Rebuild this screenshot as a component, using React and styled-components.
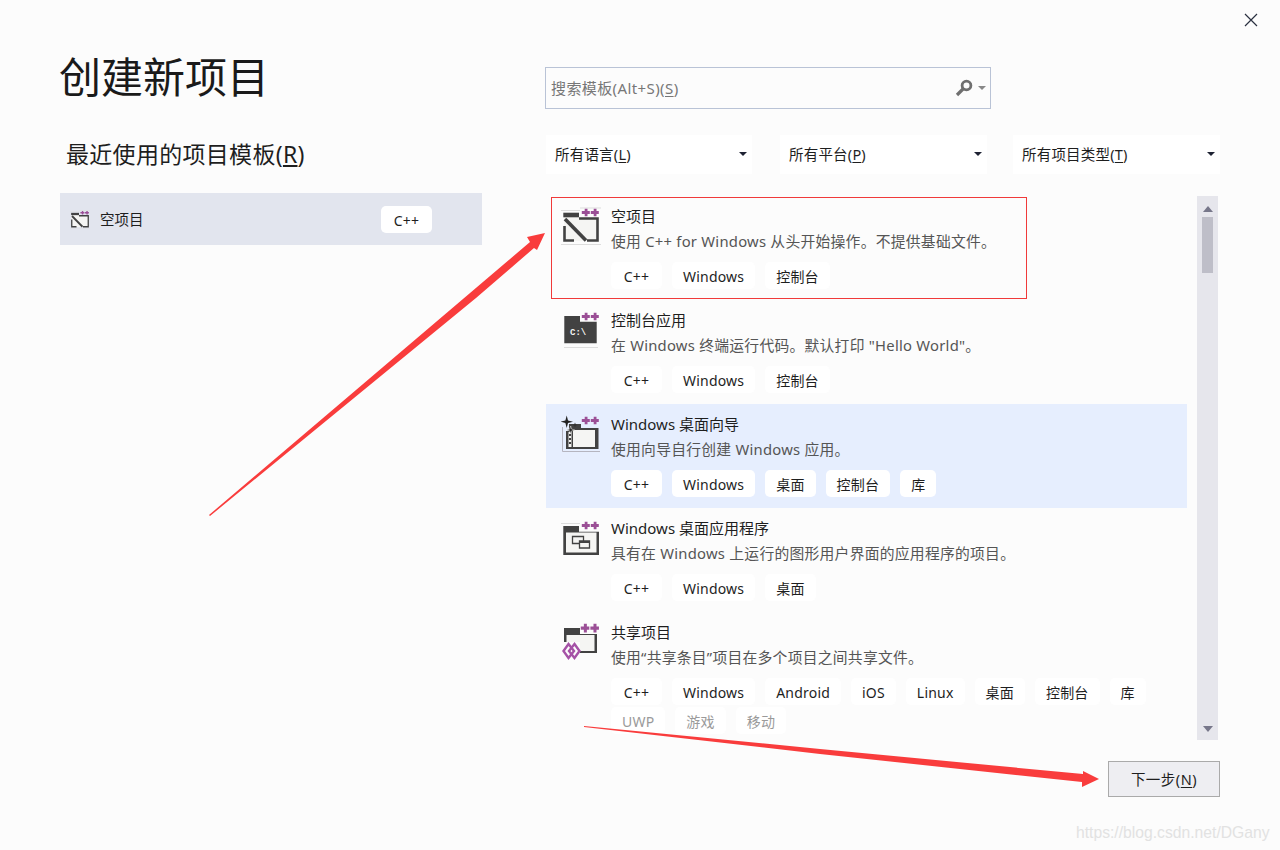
import React from 'react';
import styled, { createGlobalStyle } from 'styled-components';

const FONT = '"Noto Sans", "Noto Sans CJK SC", sans-serif';

const GlobalStyle = createGlobalStyle`
  html, body {
    margin: 0;
    padding: 0;
    background: #fcfcfc;
  }
  body {
    font-family: ${FONT};
    color: #1e1e1e;
    overflow: hidden;
  }
`;

const Window = styled.div`
  position: relative;
  width: 1280px;
  height: 850px;
  box-sizing: border-box;
  background: #fcfcfc;
  display: grid;
  grid-template-columns: 422px 674px;
  column-gap: 64px;
  padding: 0 60px;
`;

const LeftColumn = styled.div`
  display: flex;
  flex-direction: column;
`;

const Title = styled.h1`
  margin: 47px 0 0 -1px;
  height: 60px;
  font-size: 42px;
  line-height: 60px;
  font-weight: 400;
  color: #1a1a1a;
`;

const SectionTitle = styled.h2`
  margin: 29px 0 0 6px;
  height: 36px;
  font-size: 23px;
  line-height: 36px;
  font-weight: 400;
  letter-spacing: 0.3px;
  color: #1e1e1e;
`;

const RecentItem = styled.div`
  margin-top: 21px;
  height: 52px;
  box-sizing: border-box;
  background: #e2e5ee;
  display: flex;
  align-items: center;
  padding: 0 50px 0 10px;
`;

const RecentName = styled.span`
  margin: 0 0 2px 10px;
  flex: 1;
  font-size: 14.5px;
`;

const RightColumn = styled.div`
  display: flex;
  flex-direction: column;
`;

const SearchBox = styled.div`
  margin: 67px 0 0 -1px;
  width: 446px;
  height: 42px;
  box-sizing: border-box;
  border: 1px solid #b9c3d6;
  display: flex;
  align-items: center;
  padding: 0 4px 0 5px;
  gap: 5px;
`;

const SearchHint = styled.span`
  flex: 1;
  padding-bottom: 2px;
  font-size: 15px;
  letter-spacing: 0.4px;
  color: #777;
`;

const Filters = styled.div`
  margin-top: 26px;
  display: grid;
  grid-template-columns: 234px 233px 207px;
`;

const Filter = styled.div`
  width: ${(p) => p.$width}px;
  height: 39px;
  box-sizing: border-box;
  background: #fff;
  display: flex;
  align-items: center;
  justify-content: space-between;
  padding: 0 5px 2px 9px;
  font-size: 14.5px;
  letter-spacing: 0.2px;
  color: #1e1e1e;
`;

const Caret = styled.span`
  width: 0;
  height: 0;
  border-left: 4px solid transparent;
  border-right: 4px solid transparent;
  border-top: 4px solid ${(p) => p.$color || '#1e2233'};
`;

const ListArea = styled.div`
  margin-top: 22px;
  display: flex;
  height: 544px;
`;

const List = styled.div`
  width: 641px;
  overflow: hidden;
`;

const Row = styled.div`
  position: relative;
  display: flex;
  gap: 10px;
  height: 104px;
  box-sizing: border-box;
  padding: 9px 0 0 15px;
  background: ${(p) => (p.$active ? '#e6eefe' : 'transparent')};
  &:last-child {
    height: 128px;
  }
`;

const RedBox = styled.div`
  position: absolute;
  left: 5px;
  top: 1px;
  width: 476px;
  height: 102px;
  box-sizing: border-box;
  border: 1px solid #f03a3a;
  pointer-events: none;
`;

const RowIcon = styled.div`
  width: 40px;
  flex: none;
`;

const RowBody = styled.div`
  flex: 1;
  min-width: 0;
`;

const RowTitle = styled.div`
  height: 22px;
  font-size: 15px;
  line-height: 22px;
  color: #1e1e1e;
`;

const RowDesc = styled.div`
  height: 22px;
  margin-top: 3px;
  font-size: 14.8px;
  line-height: 22px;
  letter-spacing: 0.25px;
  color: #555;
`;

const Tags = styled.div`
  margin-top: 10px;
  display: flex;
  flex-wrap: wrap;
  column-gap: 10px;
  row-gap: 2px;
`;

const Tag = styled.span`
  height: 27px;
  min-width: ${(p) => p.$min || 0}px;
  box-sizing: border-box;
  padding: 0 11px;
  border-radius: 5px;
  background: #fff;
  font-size: 14px;
  line-height: 29px;
  letter-spacing: 0.2px;
  text-align: center;
  color: ${(p) => (p.$muted ? '#9a9a9a' : '#1e1e1e')};
  white-space: nowrap;
`;

const Scrollbar = styled.div`
  margin-left: 10px;
  width: 21px;
  background: #e6e6ec;
  display: flex;
  flex-direction: column;
  align-items: center;
`;

const ScrollArrow = styled.span`
  margin-top: ${(p) => p.$top}px;
  width: 0;
  height: 0;
  border-left: 5px solid transparent;
  border-right: 5px solid transparent;
  ${(p) => (p.$down ? 'border-top' : 'border-bottom')}: 6px solid #77778a;
`;

const ScrollThumb = styled.span`
  margin-top: 5px;
  width: 11px;
  height: 56px;
  background: #bebec8;
`;

const Footer = styled.div`
  margin-top: 21px;
  display: flex;
  justify-content: flex-end;
`;

const NextButton = styled.button`
  width: 112px;
  height: 36px;
  box-sizing: border-box;
  padding: 0 0 2px;
  background: #eeeef2;
  border: 1px solid #aaa;
  font-family: inherit;
  font-size: 14.5px;
  letter-spacing: 0.5px;
  color: #1e1e1e;
`;

const CloseButton = styled.button`
  position: absolute;
  top: 13px;
  left: 1244px;
  width: 14px;
  height: 14px;
  padding: 0;
  border: 0;
  background: none;
  display: flex;
`;

const Overlay = styled.svg`
  position: absolute;
  left: 0;
  top: 0;
  pointer-events: none;
`;

const Watermark = styled.span`
  position: absolute;
  left: 1076px;
  top: 823px;
  font-family: 'Liberation Sans', sans-serif;
  font-size: 15.7px;
  line-height: 20px;
  color: #e2e2e2;
`;

const Key = styled.u`
  text-underline-offset: 2px;
`;

const PlusPair = ({ y = 0, big }) => (
  <g fill="#9b4f96" transform={big ? 'translate(-2.500 -1.500) scale(1.070 1.150)' : `translate(0 ${y})`}>
    <path d="M20.800 6.100h2.900V3.800h2.800v2.300h2.300v2.800h-2.300v2.300h-2.800V8.900h-2.900z" />
    <path d="M29.800 6.100h2.900V3.800h2.800v2.300h2.300v2.800h-2.300v2.300h-2.800V8.900h-2.900z" />
  </g>
);

// each template icon is the same window frame with something different inside
const TemplateIcon = ({ kind, size = 40 }) => {
  const dark = '#424242';
  const paper = '#f5f5f3';
  return (
    <svg width={size} height={size} viewBox="0 0 40 40">
      {kind === 'empty' && (
        <g>
          <path d="M0 5.500h19M0 39.500h40M19 3h21" stroke="#ddd" fill="none" />
          <path d="M3 12h34v24H3z" fill={paper} />
          <path d="M2.300 7.700H18v4.600H2.300z" fill={dark} />
          <path d="M18 13.500h18.500V35.500H26M3.500 21V35.500H13" stroke={dark} strokeWidth="2.600" fill="none" />
          <path d="M4 14L25 35.500" stroke={dark} strokeWidth="3.600" fill="none" />
        </g>
      )}
      {kind === 'console' && (
        <g>
          <path d="M3 38.500h34" stroke="#ddd" fill="none" />
          <path d="M3.300 7H19v5.700h16.700v21.600H3.300z" fill={dark} />
          <text x="9" y="26" fontSize="9" fontWeight="700" fontFamily="Liberation Mono, monospace" fill={paper}>C:\</text>
        </g>
      )}
      {kind === 'wizard' && (
        <g>
          <path d="M1.500 14v24.500H39" stroke="#b5b5c0" fill="none" />
          <path d="M8 11H20v4h17.500v21H5V18h3z" fill={dark} />
          <path d="M12 17h22v17H12z" fill={paper} />
          <path d="M7.500 19h3v15h-3z" fill={paper} />
          <path d="M8 21h2v2H8zM8 25h2v2H8zM8 29h2v2H8z" fill={dark} />
          <path d="M5.700 2.500l1.300 5 5 1.200-5 1.300-1.300 5-1.300-5-5-1.300 5-1.200z" fill="#222" />
          <path d="M9.700 13l.9 3.100 3.100.9-3.100.9-.9 3.100-.9-3.100-3.100-.9 3.100-.9z" fill="#222" stroke={paper} strokeWidth="0.500" />
          <path d="M14 9.500l.7 1.800 1.800.7-1.800.7-.7 1.800-.7-1.800-1.800-.7 1.800-.7z" fill="#333" />
        </g>
      )}
      {kind === 'desktop' && (
        <g>
          <path d="M0 6.500h19" stroke="#ddd" fill="none" />
          <path d="M2.300 9H18v5.700h20V38H2.300z" fill={dark} />
          <path d="M5 15.500h30.500V35.500H5z" fill={paper} />
          <path d="M11.500 19.500h11v7h-11z" fill={paper} stroke={dark} strokeWidth="1.300" />
          <path d="M18.500 24h10v7h-10z" fill={paper} stroke={dark} strokeWidth="1.300" />
          <path d="M18.500 24h10v2h-10z" fill={dark} />
        </g>
      )}
      {kind === 'shared' && (
        <g>
          <path d="M3 7h16v6h17v19H3z" fill={dark} />
          <path d="M5.500 14h28v16h-28z" fill={paper} />
          <path d="M2 21h17v18H2z" fill="#fcfcfc" />
          <g fill="none" stroke="#a552a6" strokeWidth="2.400">
            <path d="M7.500 23l5.500 7-5.500 7-5-7z" />
            <path d="M13.500 23l5 7-5 7-5.500-7z" />
          </g>
        </g>
      )}
      <PlusPair y={kind === 'desktop' ? 1 : 0} big={kind === 'shared'} />
    </svg>
  );
};

const TagChip = ({ label, muted }) => (
  <Tag $muted={muted} $min={label === 'C++' ? 51 : 0}>
    {label}
  </Tag>
);

const Template = ({ kind, title, desc, tags, muted = [], active, marked }) => (
  <Row $active={active}>
    <RowIcon>
      <TemplateIcon kind={kind} />
    </RowIcon>
    <RowBody>
      <RowTitle>{title}</RowTitle>
      <RowDesc>{desc}</RowDesc>
      <Tags>
        {tags.map((t) => (
          <TagChip key={t} label={t} />
        ))}
        {muted.map((t) => (
          <TagChip key={t} label={t} muted />
        ))}
      </Tags>
    </RowBody>
    {marked && <RedBox />}
  </Row>
);

const templates = [
  {
    kind: 'empty',
    title: '空项目',
    desc: '使用 C++ for Windows 从头开始操作。不提供基础文件。',
    tags: ['C++', 'Windows', '控制台'],
    marked: true,
  },
  {
    kind: 'console',
    title: '控制台应用',
    desc: '在 Windows 终端运行代码。默认打印 "Hello World"。',
    tags: ['C++', 'Windows', '控制台'],
  },
  {
    kind: 'wizard',
    title: 'Windows 桌面向导',
    desc: '使用向导自行创建 Windows 应用。',
    tags: ['C++', 'Windows', '桌面', '控制台', '库'],
    active: true,
  },
  {
    kind: 'desktop',
    title: 'Windows 桌面应用程序',
    desc: '具有在 Windows 上运行的图形用户界面的应用程序的项目。',
    tags: ['C++', 'Windows', '桌面'],
  },
  {
    kind: 'shared',
    title: '共享项目',
    desc: '使用“共享条目”项目在多个项目之间共享文件。',
    tags: ['C++', 'Windows', 'Android', 'iOS', 'Linux', '桌面', '控制台', '库'],
    muted: ['UWP', '游戏', '移动'],
  },
];

const filters = [
  ['所有语言', 'L', 206],
  ['所有平台', 'P', 207],
  ['所有项目类型', 'T', 207],
];

const App = () => (
  <Window>
    <GlobalStyle />
    <LeftColumn>
      <Title>创建新项目</Title>
      <SectionTitle>
        最近使用的项目模板(<Key>R</Key>)
      </SectionTitle>
      <RecentItem>
        <TemplateIcon kind="empty" size={20} />
        <RecentName>空项目</RecentName>
        <TagChip label="C++" />
      </RecentItem>
    </LeftColumn>

    <RightColumn>
      <SearchBox>
        <SearchHint>
          搜索模板(Alt+S)(<Key>S</Key>)
        </SearchHint>
        <svg width="18" height="18" viewBox="0 0 18 18">
          <circle cx="11.500" cy="6.500" r="4.400" fill="none" stroke="#6f6f6f" strokeWidth="2.800" />
          <path d="M8 10L2 16" stroke="#6f6f6f" strokeWidth="3.200" />
        </svg>
        <Caret $color="#888" />
      </SearchBox>
      <Filters>
        {filters.map(([label, key, width]) => (
          <Filter key={key} $width={width}>
            <span>
              {label}(<Key>{key}</Key>)
            </span>
            <Caret />
          </Filter>
        ))}
      </Filters>
      <ListArea>
        <List>
          {templates.map((t) => (
            <Template key={t.kind} {...t} />
          ))}
        </List>
        <Scrollbar>
          <ScrollArrow $top={10} />
          <ScrollThumb />
          <ScrollArrow $top={453} $down />
        </Scrollbar>
      </ListArea>
      <Footer>
        <NextButton>
          下一步(<Key>N</Key>)
        </NextButton>
      </Footer>
    </RightColumn>

    <CloseButton>
      <svg width="14" height="14" viewBox="0 0 14 14">
        <path d="M1 1l12 12M13 1L1 13" stroke="#2a3040" strokeWidth="1.200" />
      </svg>
    </CloseButton>

    <Overlay width="1280" height="850" viewBox="0 0 1280 850">
      <path d="M209 515L530 242L527 237L545 233L537 250L534 248L476 298L210 516z" fill="#f93c3c" />
      <path d="M584 726L820 749L1083 774L1083 771L1099 779L1082 787L1082 782L820 754L584 727z" fill="#f93c3c" />
    </Overlay>
    <Watermark>https://blog.csdn.net/DGany</Watermark>
  </Window>
);

export default App;
